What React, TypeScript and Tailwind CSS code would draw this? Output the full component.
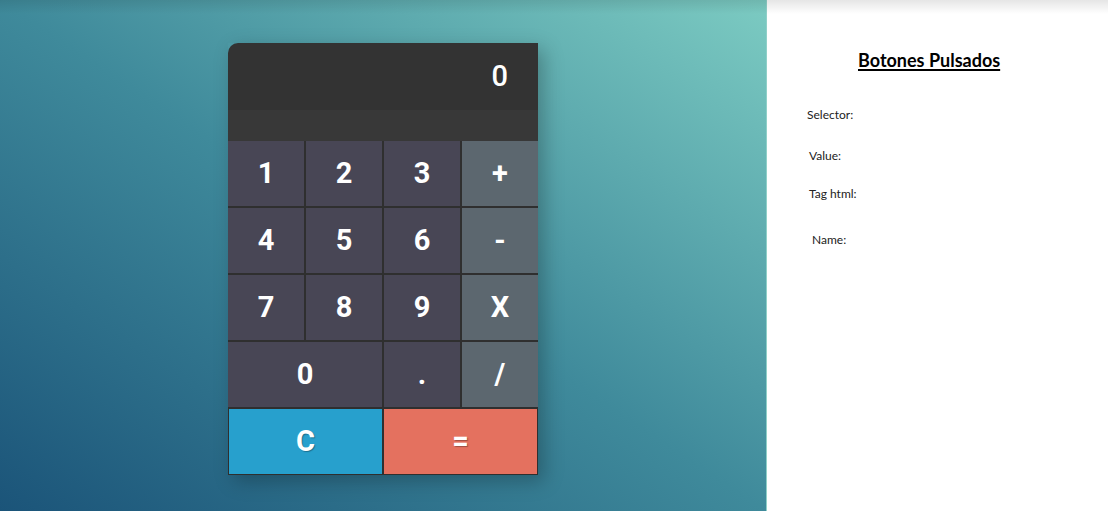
const keys = [
  { label: "1", kind: "num" },
  { label: "2", kind: "num" },
  { label: "3", kind: "num" },
  { label: "+", kind: "op" },
  { label: "4", kind: "num" },
  { label: "5", kind: "num" },
  { label: "6", kind: "num" },
  { label: "-", kind: "op" },
  { label: "7", kind: "num" },
  { label: "8", kind: "num" },
  { label: "9", kind: "num" },
  { label: "X", kind: "op" },
  { label: "0", kind: "wide" },
  { label: ".", kind: "num" },
  { label: "/", kind: "op" },
];

const kindClass: Record<string, string> = {
  num: "bg-[#484655]",
  op: "bg-[#5c676f]",
  wide: "bg-[#484655] col-span-2",
};

function Calculator() {
  return (
    <div className="w-[310px] shadow-[6px_6px_18px_rgba(0,0,0,0.25)]" style={{ fontFamily: "Roboto, sans-serif" }}>
      <div className="rounded-tl-[10px] bg-[#333333] h-[67px] flex items-center justify-end pr-[30px]">
        <span className="text-white text-[29px] font-medium leading-none">0</span>
      </div>
      <div className="bg-[#383838] h-[31px]" />
      <div className="grid grid-cols-4 grid-rows-[repeat(5,65px)] gap-[2px] bg-[#2f2f2f] border-b border-[#2f2f2f]">
        {keys.map((k) => (
          <button
            key={k.label}
            className={`${kindClass[k.kind]} text-white text-[29px] font-bold flex items-center justify-center`}
          >
            {k.label}
          </button>
        ))}
        <button className="col-span-2 bg-[#27a0cd] text-white text-[29px] font-bold flex items-center justify-center [text-shadow:1px_1px_1px_rgba(0,0,0,0.3)] border-l border-[#2f2f2f]">
          C
        </button>
        <button className="col-span-2 bg-[#e4715f] text-white text-[29px] font-bold flex items-center justify-center [text-shadow:1px_1px_1px_rgba(0,0,0,0.3)] border-r border-[#2f2f2f]">
          =
        </button>
      </div>
    </div>
  );
}

export default function App() {
  return (
    <div className="relative flex w-[1108px] h-[511px] overflow-hidden">
      <div className="w-[766px] h-full bg-[linear-gradient(to_top_right,#1b5479,#3f8a9b_50%,#7ccbc2)] pl-[228px] pt-[43px]">
        <Calculator />
      </div>
      <div className="flex-1 h-full bg-white border-l border-[#8fd0c8]" style={{ fontFamily: "Lato, 'Open Sans', sans-serif" }}>
        <h1 className="mt-[47px] ml-[91px] text-[18px] font-bold underline decoration-[1.5px] underline-offset-2 text-black">
          Botones Pulsados
        </h1>
        <div className="text-[12px] text-[#222] mt-[32px]">
          <p className="ml-[40px]">Selector:</p>
          <p className="ml-[42px] mt-[23px]">Value:</p>
          <p className="ml-[42px] mt-[20px]">Tag html:</p>
          <p className="ml-[45px] mt-[28px]">Name:</p>
        </div>
      </div>
      <div className="absolute top-0 inset-x-0 h-[14px] bg-gradient-to-b from-black/10 to-transparent pointer-events-none" />
    </div>
  );
}
